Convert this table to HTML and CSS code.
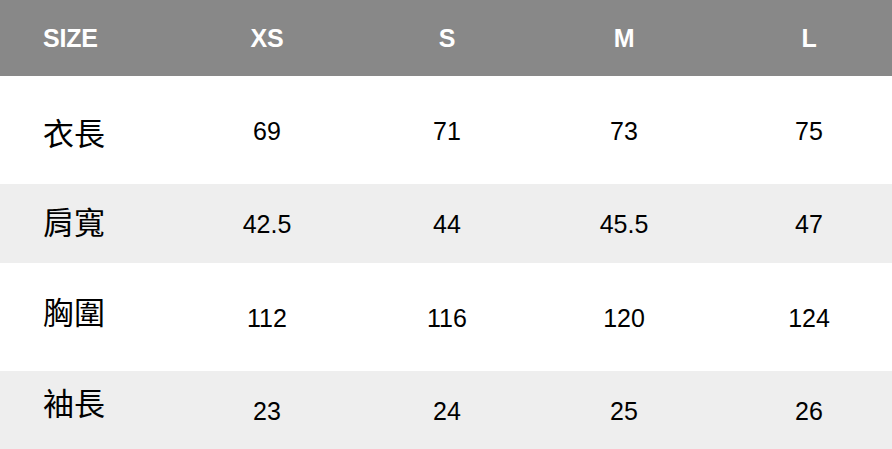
FILE: index.html
```html
<!DOCTYPE html>
<html lang="zh-Hant">
<head>
<meta charset="utf-8">
<link rel="stylesheet" href="styles.css">
</head>
<body>
<div class="size-table">
  <div class="row row--head">
    <div class="cell cell--label">SIZE</div>
    <div class="cell">XS</div>
    <div class="cell">S</div>
    <div class="cell">M</div>
    <div class="cell">L</div>
  </div>
  <div class="row row--tall">
    <div class="cell cell--label label--r1">衣長</div>
    <div class="cell">69</div>
    <div class="cell">71</div>
    <div class="cell">73</div>
    <div class="cell">75</div>
  </div>
  <div class="row row--short row--shade">
    <div class="cell cell--label label--r2">肩寬</div>
    <div class="cell">42.5</div>
    <div class="cell">44</div>
    <div class="cell">45.5</div>
    <div class="cell">47</div>
  </div>
  <div class="row row--tall">
    <div class="cell cell--label label--r3">胸圍</div>
    <div class="cell">112</div>
    <div class="cell">116</div>
    <div class="cell">120</div>
    <div class="cell">124</div>
  </div>
  <div class="row row--last row--shade">
    <div class="cell cell--label label--r4">袖長</div>
    <div class="cell">23</div>
    <div class="cell">24</div>
    <div class="cell">25</div>
    <div class="cell">26</div>
  </div>
</div>
</body>
</html>
```
FILE: styles.css
```css
html, body {
  margin: 0;
  padding: 0;
  background: #ffffff;
}
body {
  font-family: "Liberation Sans", Arial, "Noto Sans CJK TC", sans-serif;
  color: #000000;
}
.size-table {
  width: 892px;
  display: flex;
  flex-direction: column;
}
.row {
  display: grid;
  grid-template-columns: 162px 210px 150px 204px 166px;
  align-items: center;
  justify-items: center;
  font-size: 25px;
}
.row--head {
  height: 76px;
  background: #888888;
  color: #ffffff;
  font-weight: bold;
  font-size: 25px;
  letter-spacing: -0.2px;
}
.row--tall { height: 108px; }
.row--short { height: 79px; }
.row--last { height: 78px; }
.row--shade { background: #eeeeee; }
.cell {
  padding-top: 2px;
}
.row--head .cell { padding-top: 0; }
.cell--label {
  justify-self: start;
  padding-left: 43px;
  font-family: "Noto Sans CJK TC", "Noto Sans CJK JP", sans-serif;
  font-size: 31px;
  font-weight: 400;
  line-height: 1;
}
.row--head .cell--label {
  font-family: "Liberation Sans", Arial, sans-serif;
  font-size: 25px;
  font-weight: bold;
  line-height: normal;
}
.label--r1 { padding-top: 2px; }
.label--r2 { padding-top: 0; margin-bottom: 7px; }
.label--r3 { padding-top: 0; margin-bottom: 14px; }
.label--r4 { padding-top: 0; margin-bottom: 18px; }
```
